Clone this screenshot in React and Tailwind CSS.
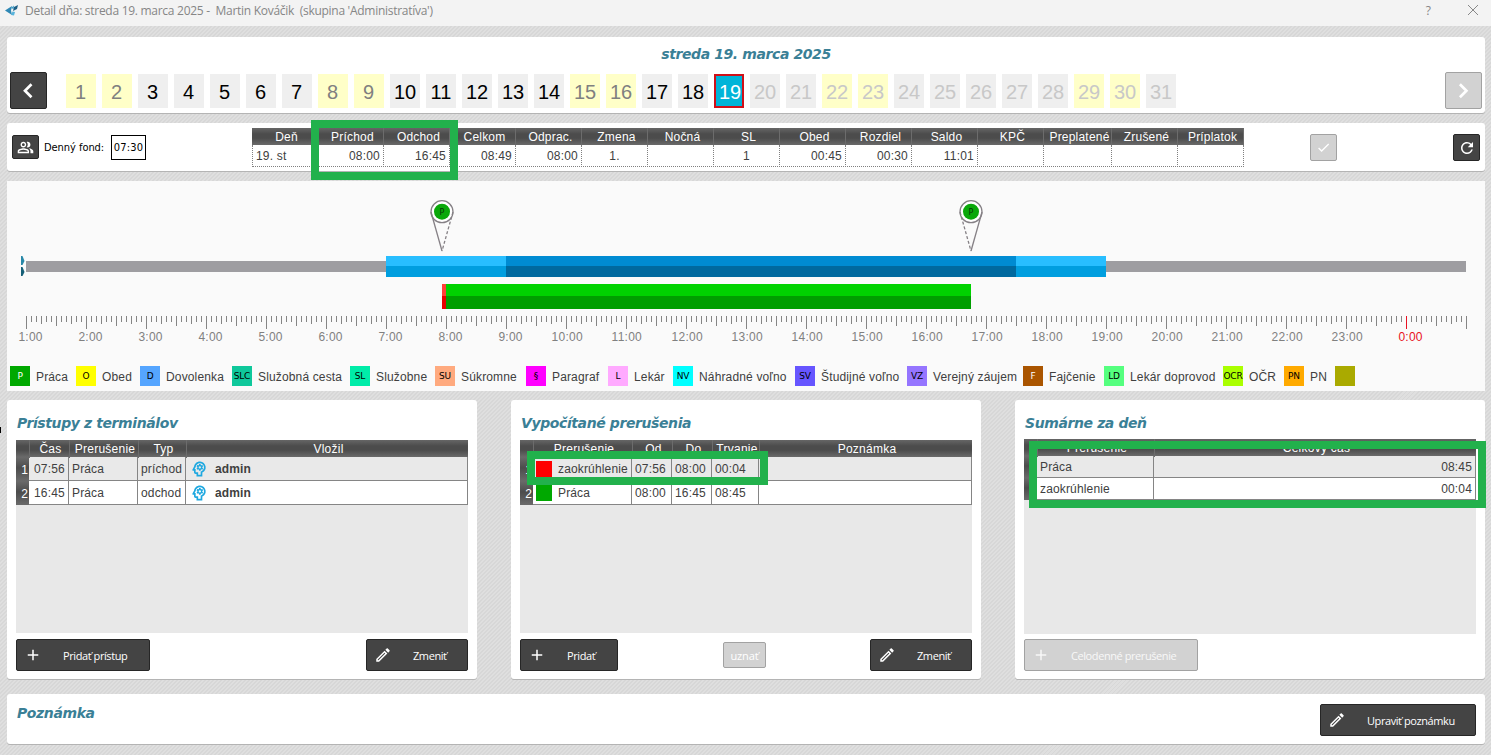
import {
  MdAdd,
  MdCheck,
  MdOutlineEdit,
  MdOutlinePeopleAlt,
  MdOutlinePsychology,
  MdRefresh,
} from "react-icons/md";

const SELECTED_DAY = 19;
const WEEKEND_DAYS = [1, 2, 8, 9, 15, 16, 22, 23, 29, 30];
const days = Array.from({ length: 31 }, (_, i) => i + 1);

const dayColumns = [
  { label: "Deň", value: "19. st", align: "text-left" },
  { label: "Príchod", value: "08:00", align: "text-right" },
  { label: "Odchod", value: "16:45", align: "text-right" },
  { label: "Celkom", value: "08:49", align: "text-right" },
  { label: "Odprac.", value: "08:00", align: "text-right" },
  { label: "Zmena", value: "1.", align: "text-center" },
  { label: "Nočná", value: "", align: "text-right" },
  { label: "SL", value: "1", align: "text-center" },
  { label: "Obed", value: "00:45", align: "text-right" },
  { label: "Rozdiel", value: "00:30", align: "text-right" },
  { label: "Saldo", value: "11:01", align: "text-right" },
  { label: "KPČ", value: "", align: "text-right" },
  { label: "Preplatené", value: "", align: "text-right" },
  { label: "Zrušené", value: "", align: "text-right" },
  { label: "Príplatok", value: "", align: "text-right" },
];

const legend = [
  { code: "P", label: "Práca", color: "bg-[#00a800] text-white" },
  { code: "O", label: "Obed", color: "bg-[#ffff00] text-black" },
  { code: "D", label: "Dovolenka", color: "bg-[#55a5ff] text-black" },
  { code: "SLC", label: "Služobná cesta", color: "bg-[#0fc89b] text-black" },
  { code: "SL", label: "Služobne", color: "bg-[#00eca8] text-black" },
  { code: "SU", label: "Súkromne", color: "bg-[#ffaa7f] text-black" },
  { code: "§", label: "Paragraf", color: "bg-[#ff00ff] text-black" },
  { code: "L", label: "Lekár", color: "bg-[#ffaaff] text-black" },
  { code: "NV", label: "Náhradné voľno", color: "bg-[#00ffff] text-black" },
  { code: "SV", label: "Študijné voľno", color: "bg-[#6655ff] text-black" },
  { code: "VZ", label: "Verejný záujem", color: "bg-[#9575ff] text-black" },
  { code: "F", label: "Fajčenie", color: "bg-[#aa5500] text-white" },
  { code: "LD", label: "Lekár doprovod", color: "bg-[#55ff7f] text-black" },
  { code: "OCR", label: "OČR", color: "bg-[#aaff00] text-black" },
  { code: "PN", label: "PN", color: "bg-[#ffaa00] text-black" },
  { code: "", label: "", color: "bg-[#aaaa00]" },
];

const headGradient = "bg-[linear-gradient(#666_0%,#4c4c4c_35%,#4c4c4c_60%,#6a6a6a_100%)]";

const Card = ({ className, children }) => (
  <section className={`rounded-[3px] bg-white shadow-[0_1px_0_#b4b4b4] ${className}`}>{children}</section>
);

const Heading = ({ children, className = "" }) => (
  <h2
    className={`font-['DejaVu_Sans',sans-serif] text-[14px] leading-5 font-bold italic tracking-[-0.4px] text-[#3a8096] whitespace-nowrap ${className}`}
  >
    {children}
  </h2>
);

const ActionButton = ({ icon: Icon, children, width, disabled }) => (
  <button
    disabled={disabled}
    className={`flex h-8 shrink-0 items-center rounded-[2px] border pl-[7px] font-['Open_Sans',sans-serif] text-[11px] whitespace-nowrap ${width} ${
      disabled ? "border-[#a2a2a2] bg-[#d2d2d2] text-[#f8f8f8]" : "border-[#262626] bg-[#444] text-white"
    }`}
  >
    <Icon size={18} />
    <span className="mt-0.5 ml-[21px] tracking-[-0.42px]">{children}</span>
  </button>
);

const Frame = ({ className }) => (
  <div className={`pointer-events-none absolute border-8 border-[#22b14c] ${className}`} />
);

const TitleBar = () => (
  <header className="flex h-[26px] items-start bg-[#f3f3f3] pt-[2px] pl-1 font-['Open_Sans',sans-serif] text-[12px] leading-[17px] text-[#868686]">
    <svg width="15" height="13" viewBox="0 0 15 13" className="mt-[2px]">
      <path d="M1 6.5 L8 2 L7 6.5 L8 11 Z" fill="#2f88b5" />
      <path d="M7 4 L10 1.5 L9.5 5 Z" fill="#3a9cc8" />
      <path d="M10 3 L14 1 L13 5 L9 7 Z" fill="#1d5f86" />
      <path d="M8.5 7.5 L11 8 L10 11.5 L7 11 Z" fill="#58b4dc" />
    </svg>
    <h1 className="ml-[6px] tracking-[-0.28px] whitespace-pre">
      Detail dňa: streda 19. marca 2025 -  Martin Kováčik  (skupina 'Administratíva')
    </h1>
    <span className="mr-9 ml-auto text-[12px]">?</span>
    <svg width="12" height="12" viewBox="0 0 12 12" className="mt-[2px] mr-3" stroke="#888" fill="none">
      <path d="M1 1 L11 11 M11 1 L1 11" />
    </svg>
  </header>
);

const NavButton = ({ direction, disabled }) => (
  <button
    disabled={disabled}
    className={`flex h-[37px] w-[37px] items-center justify-center rounded-[2px] border ${
      disabled ? "border-[#a2a2a2] bg-[#d2d2d2]" : "border-[#262626] bg-[#444]"
    }`}
  >
    <svg width="16" height="18" viewBox="0 0 16 18" fill="none" stroke="#fff" strokeWidth="2.7">
      <path d={direction === "prev" ? "M10.5 2.3 L4 8.8 L10.5 15.3" : "M3.9 2.3 L10.4 8.8 L3.9 15.3"} />
    </svg>
  </button>
);

const DayPicker = () => {
  const dayColor = (day) => {
    if (day === SELECTED_DAY) return "border-2 border-[#d01018] bg-[#00b4d8] pl-0.5 text-white";
    const background = WEEKEND_DAYS.includes(day) ? "bg-[#ffffc8]" : "bg-[#efefef]";
    if (day > SELECTED_DAY) return `${background} text-[#c8c8c8]`;
    return `${background} ${WEEKEND_DAYS.includes(day) ? "text-[#808080]" : "text-black"}`;
  };

  return (
    <Card className="h-[76px]">
      <Heading className="pt-[7px] text-center">streda 19. marca 2025</Heading>
      <div className="mt-2 flex items-center px-[3px]">
        <NavButton direction="prev" />
        <div className="ml-[19px] flex gap-1.5">
          {days.map((day) => (
            <div
              key={day}
              className={`flex h-[34px] w-[30px] items-center justify-center pt-0.5 text-[20px] leading-none ${day < 10 ? "pr-px" : ""} ${dayColor(day)}`}
            >
              {day}
            </div>
          ))}
        </div>
        <div className="ml-auto">
          <NavButton direction="next" disabled />
        </div>
      </div>
    </Card>
  );
};

const DaySummary = () => (
  <Card className="mt-[10px] flex h-12 items-start">
    <button className="mt-3 ml-[5px] flex h-6 w-[27px] items-center justify-center rounded-[2px] border border-[#262626] bg-[#444] text-white">
      <MdOutlinePeopleAlt size={17} />
    </button>
    <label className="mt-3 ml-[5px] flex h-[25px] items-center font-['DejaVu_Sans_Condensed','DejaVu_Sans',sans-serif] text-[11px] whitespace-nowrap text-black">
      <span className="w-[67px] pt-0.5 tracking-[-0.05px]">Denný fond:</span>
      <span className="flex h-[25px] w-[35px] items-center justify-center border border-black pt-0.5 tracking-[0.2px]">07:30</span>
    </label>
    <div className="mt-[5px] ml-[106px] w-[992px]">
      <div className={`grid h-[17px] grid-cols-[repeat(12,66px)_68px_66px_66px] text-white ${headGradient}`}>
        {dayColumns.map((col) => (
          <div key={col.label} className="border-r border-[#6c6c6c] pl-[4px] text-center leading-[18px] tracking-[0.2px]">
            {col.label}
          </div>
        ))}
      </div>
      <div className="grid h-[22px] grid-cols-[repeat(12,66px)_68px_66px_66px] border-b border-dotted border-[#808080]">
        {dayColumns.map((col) => (
          <div
            key={col.label}
            className={`border-r border-dotted border-[#808080] pr-[3px] pl-[3px] leading-[22px] tracking-[0.2px] first:border-l ${col.align}`}
          >
            {col.value}
          </div>
        ))}
      </div>
    </div>
    <button
      disabled
      className="mt-[11px] ml-[66px] flex h-[27px] w-[27px] items-center justify-center rounded-[2px] border border-[#a2a2a2] bg-[#d2d2d2] text-white"
    >
      <MdCheck size={15} />
    </button>
    <button className="mt-[11px] ml-[116px] flex h-[27px] w-[27px] items-center justify-center rounded-[2px] border border-[#262626] bg-[#444] text-white">
      <MdRefresh size={18} />
    </button>
  </Card>
);

// the axis runs from 1:00 to 1:00 of the next day, one minute is one pixel
const AXIS_START = 19;
const HOUR = 60;
const hourX = (hour) => AXIS_START + (hour - 1) * HOUR;

const tickLength = (minute) => {
  if (minute % 60 === 0) return 13;
  if (minute % 30 === 0) return 10;
  if (minute % 15 === 0) return 8;
  return 6;
};

const Pin = ({ x, dashed }) => (
  <g fill="none" stroke="#858085" strokeWidth="1.3">
    <circle cx={x} cy="30.7" r="11" fill="#fff" />
    <path d={`M${x - 11} 31 L${x} 70`} strokeDasharray={dashed === "left" ? "3 2" : undefined} />
    <path d={`M${x + 11} 31 L${x} 70`} strokeDasharray={dashed === "right" ? "3 2" : undefined} />
    <circle cx={x} cy="30.7" r="8" fill="#0aa80a" stroke="none" />
    <text x={x} y="34" fill="#083808" stroke="none" fontSize="8" textAnchor="middle" fontFamily="DejaVu Sans">
      P
    </text>
  </g>
);

const Timeline = () => (
  <section className="mt-[10px] h-[210px] bg-[#fafafa]">
    <svg width="1478" height="175" viewBox="0 0 1478 175" className="block">
      <Pin x={435} dashed="right" />
      <Pin x={964} dashed="left" />

      <path d="M14 75 L15.5 75 L17.5 80 L15.5 84 L14 84 Z" fill="#2888a8" />
      <path d="M14 86 L15.5 86 L17.5 91 L15.5 95 L14 95 Z" fill="#176078" />
      <rect x={hourX(1)} y="80" width={24 * HOUR} height="11" fill="#9e9da1" />

      {/* flexible shift with its core part */}
      <rect x={hourX(7)} y="75" width={12 * HOUR} height="10" fill="#28beff" />
      <rect x={hourX(7)} y="85" width={12 * HOUR} height="11" fill="#009edf" />
      <rect x={hourX(9)} y="75" width={8.5 * HOUR} height="10" fill="#008bd2" />
      <rect x={hourX(9)} y="85" width={8.5 * HOUR} height="11" fill="#00699f" />

      {/* rounding, then work */}
      <rect x="435" y="103" width="4" height="12" fill="#ff4038" />
      <rect x="435" y="115" width="4" height="13" fill="#e80000" />
      <rect x={hourX(8)} y="103" width="525" height="12" fill="#00d200" />
      <rect x={hourX(8)} y="115" width="525" height="13" fill="#009e00" />

      {Array.from({ length: 289 }, (_, i) => i * 5).map((minute) => (
        <rect
          key={minute}
          x={AXIS_START + minute}
          y="135"
          width="1"
          height={tickLength(minute)}
          fill={minute === 23 * 60 ? "#e81123" : "#858585"}
        />
      ))}
      {Array.from({ length: 24 }, (_, i) => i + 1).map((hour) => (
        <text
          key={hour}
          x={hourX(hour) - (hour > 9 && hour < 24 ? 14.4 : 7.6)}
          y="160"
          fontSize="12"
          letterSpacing="0.25"
          fill={hour === 24 ? "#e81123" : "#808080"}
        >
          {hour % 24}:00
        </text>
      ))}
    </svg>
    <div className="mt-[10px] ml-[3px] grid grid-cols-[66px_64px_92px_118px_85px_91px_82px_65px_122px_112px_116px_81px_119px_61px_51px_20px]">
      {legend.map((item) => (
        <div key={item.color} className="flex items-center whitespace-nowrap">
          <span
            className={`flex h-5 w-5 shrink-0 items-center justify-center pt-0.5 font-['DejaVu_Sans',sans-serif] text-[9px] tracking-[-0.2px] ${item.color}`}
          >
            {item.code}
          </span>
          <span className="mt-0.5 ml-[6px] tracking-[0.15px]">{item.label}</span>
        </div>
      ))}
    </div>
  </section>
);

const HeadCell = ({ children }) => (
  <div className="h-full border-l border-[#6c6c6c] pl-[2px] text-center text-white tracking-[0.25px] whitespace-nowrap">
    {children}
  </div>
);

const RowNumber = ({ children }) => (
  <div className="flex items-center justify-end bg-[linear-gradient(#6a6a6a_0%,#4c4c4c_45%,#6a6a6a_100%)] pt-px pr-px leading-5 text-white">
    {children}
  </div>
);

const Cell = ({ children, className = "" }) => (
  <div
    className={`flex items-center border-r border-b border-[#858585] px-[3px] pt-px leading-5 tracking-[0.15px] whitespace-nowrap ${className}`}
  >
    {children}
  </div>
);

const accesses = [
  { time: "07:56", kind: "Práca", type: "príchod", author: "admin" },
  { time: "16:45", kind: "Práca", type: "odchod", author: "admin" },
];

const AccessCard = () => (
  <Card className="flex w-[470px] flex-col px-[9px] pt-[13px] pb-2">
    <Heading className="pl-px">Prístupy z terminálov</Heading>
    <div className="mt-[7px] h-[193px] bg-[#e8e8e8]">
      <div className={`grid h-[17px] grid-cols-[13px_40px_69px_48px_282px] leading-[18px] ${headGradient}`}>
        <div />
        <HeadCell>Čas</HeadCell>
        <HeadCell>Prerušenie</HeadCell>
        <HeadCell>Typ</HeadCell>
        <HeadCell>Vložil</HeadCell>
      </div>
      {accesses.map((row, index) => (
        <div
          key={row.time}
          className={`grid h-6 grid-cols-[13px_40px_69px_48px_282px] ${index === 0 ? "bg-[#e9e9e9]" : "bg-white"}`}
        >
          <RowNumber>{index + 1}</RowNumber>
          <Cell className="pl-[5px]">{row.time}</Cell>
          <Cell>{row.kind}</Cell>
          <Cell>{row.type}</Cell>
          <Cell className="font-bold">
            <MdOutlinePsychology size={20} className="mb-px text-[#1ea8e0]" />
            <span className="ml-[6px]">{row.author}</span>
          </Cell>
        </div>
      ))}
    </div>
    <div className="mt-[6px] flex justify-between">
      <ActionButton icon={MdAdd} width="w-[134px]">Pridať prístup</ActionButton>
      <ActionButton icon={MdOutlineEdit} width="w-[102px]">Zmeniť</ActionButton>
    </div>
  </Card>
);

const interruptions = [
  { kind: "zaokrúhlenie", from: "07:56", to: "08:00", duration: "00:04", color: "bg-[#ff0000]" },
  { kind: "Práca", from: "08:00", to: "16:45", duration: "08:45", color: "bg-[#00a800]" },
];

const InterruptionCard = () => (
  <Card className="relative flex w-[470px] flex-col px-[9px] pt-[13px] pb-2">
    <Heading className="pl-px">Vypočítané prerušenia</Heading>
    <div className="mt-[7px] h-[193px] bg-[#e8e8e8]">
      <div className={`grid h-[17px] grid-cols-[13px_99px_40px_40px_47px_213px] leading-[18px] ${headGradient}`}>
        <div />
        <HeadCell>Prerušenie</HeadCell>
        <HeadCell>Od</HeadCell>
        <HeadCell>Do</HeadCell>
        <HeadCell>Trvanie</HeadCell>
        <HeadCell>Poznámka</HeadCell>
      </div>
      {interruptions.map((row, index) => (
        <div
          key={row.kind}
          className={`grid h-6 grid-cols-[13px_99px_40px_40px_47px_213px] ${index === 0 ? "bg-[#e9e9e9]" : "bg-white"}`}
        >
          <RowNumber>{index + 1}</RowNumber>
          <Cell>
            <span className={`mb-px h-4 w-4 shrink-0 ${row.color}`} />
            <span className="ml-[6px]">{row.kind}</span>
          </Cell>
          <Cell>{row.from}</Cell>
          <Cell>{row.to}</Cell>
          <Cell>{row.duration}</Cell>
          <Cell />
        </div>
      ))}
    </div>
    <div className="mt-[6px] flex items-center">
      <ActionButton icon={MdAdd} width="w-[98px]">Pridať</ActionButton>
      <button
        disabled
        className="ml-[105px] h-[26px] w-[43px] rounded-[2px] border border-[#a2a2a2] bg-[#d2d2d2] pt-0.5 font-['Open_Sans',sans-serif] text-[11px] tracking-[-0.1px] text-white"
      >
        uznať
      </button>
      <div className="ml-auto">
        <ActionButton icon={MdOutlineEdit} width="w-[102px]">Zmeniť</ActionButton>
      </div>
    </div>
    <Frame className="top-[51px] left-4 h-[34px] w-[241px]" />
  </Card>
);

const totals = [
  { kind: "Práca", total: "08:45" },
  { kind: "zaokrúhlenie", total: "00:04" },
];

const TotalsCard = () => (
  <Card className="relative flex w-[470px] flex-col px-[9px] pt-[13px] pb-2">
    <Heading className="pl-px">Sumárne za deň</Heading>
    <div className="mt-[6px] h-[195px] bg-[#e8e8e8]">
      <div className={`grid h-[17px] grid-cols-[13px_117px_322px] leading-[18px] ${headGradient}`}>
        <div />
        <HeadCell>Prerušenie</HeadCell>
        <HeadCell>Celkový čas</HeadCell>
      </div>
      {totals.map((row, index) => (
        <div
          key={row.kind}
          className={`grid h-[22px] grid-cols-[13px_117px_322px] ${index === 0 ? "bg-[#e9e9e9]" : "bg-white"}`}
        >
          <RowNumber>{index + 1}</RowNumber>
          <Cell>{row.kind}</Cell>
          <Cell className="justify-end">{row.total}</Cell>
        </div>
      ))}
    </div>
    <div className="mt-[5px] flex">
      <ActionButton icon={MdAdd} width="w-[174px]" disabled>Celodenné prerušenie</ActionButton>
    </div>
    <Frame className="top-[41px] left-[14px] h-[67px] w-[457px]" />
  </Card>
);

const App = () => {
  return (
    <div className="relative h-[755px] w-[1491px] overflow-hidden bg-[repeating-linear-gradient(135deg,#d7d7d7_0px,#d7d7d7_1.41px,#dfdfdf_1.41px,#dfdfdf_2.83px)] font-['Liberation_Sans',Arial,sans-serif] text-[12px] text-[#404040]">
      <TitleBar />
      <main className="mt-[11px] ml-[7px] w-[1478px]">
        <DayPicker />
        <DaySummary />
        <Timeline />
        <div className="mt-[9px] flex h-[279px] justify-between">
          <AccessCard />
          <InterruptionCard />
          <TotalsCard />
        </div>
        <Card className="mt-[15px] flex h-[50px] justify-between pr-[9px] pl-[9px]">
          <Heading className="mt-[9px] pl-px">Poznámka</Heading>
          <div className="mt-[10px]">
            <ActionButton icon={MdOutlineEdit} width="w-[156px]">Upraviť poznámku</ActionButton>
          </div>
        </Card>
      </main>
      <Frame className="top-[120px] left-[311px] h-[60px] w-[147px]" />
      <div className="absolute top-[427px] left-0 h-[6px] w-px bg-black" />
    </div>
  );
};

export default App;
